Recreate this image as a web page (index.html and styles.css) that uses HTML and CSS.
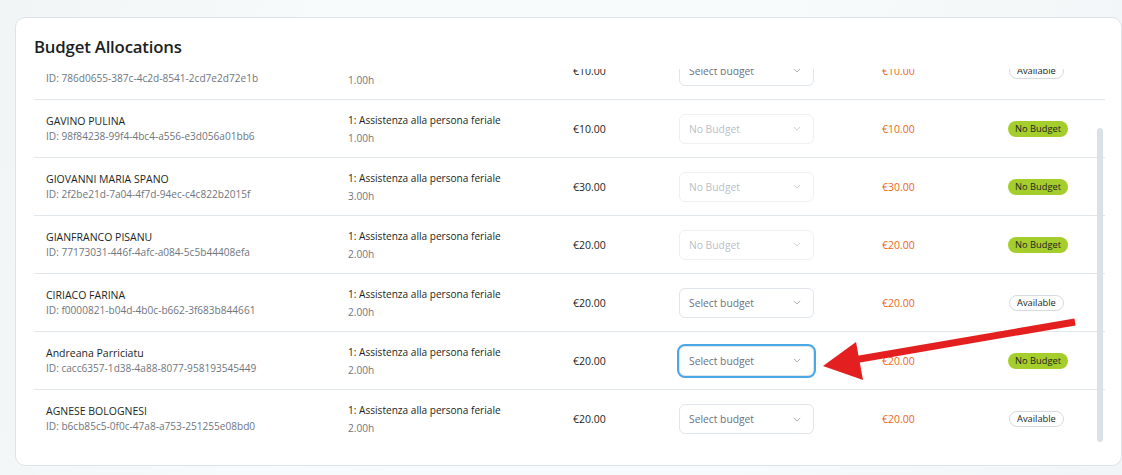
FILE: index.html
```html
<!DOCTYPE html>
<html lang="en">
<head>
<meta charset="utf-8">
<title>Budget Allocations</title>
<link rel="stylesheet" href="styles.css">
</head>
<body>
<section class="card">
  <h2 class="card-title">Budget Allocations</h2>
  <div class="viewport">
    <div class="table">
      <div class="row">
        <div class="cell person"><div class="name">ALTRO NOME</div><div class="sub">ID: 786d0655-387c-4c2d-8541-2cd7e2d72e1b</div></div>
        <div class="cell service"><div class="svc">1: Assistenza alla persona feriale</div><div class="sub">1.00h</div></div>
        <div class="cell amount">€10.00</div>
        <div class="cell"><div class="select"><span>Select budget</span><svg class="chev" viewBox="0 0 10 6"><path d="M1 1l4 4 4-4"/></svg></div></div>
        <div class="cell due">€10.00</div>
        <div class="cell"><span class="badge avail">Available</span></div>
      </div>
      <div class="row">
        <div class="cell person"><div class="name">GAVINO PULINA</div><div class="sub">ID: 98f84238-99f4-4bc4-a556-e3d056a01bb6</div></div>
        <div class="cell service"><div class="svc">1: Assistenza alla persona feriale</div><div class="sub">1.00h</div></div>
        <div class="cell amount">€10.00</div>
        <div class="cell"><div class="select disabled"><span>No Budget</span><svg class="chev" viewBox="0 0 10 6"><path d="M1 1l4 4 4-4"/></svg></div></div>
        <div class="cell due">€10.00</div>
        <div class="cell"><span class="badge none">No Budget</span></div>
      </div>
      <div class="row">
        <div class="cell person"><div class="name">GIOVANNI MARIA SPANO</div><div class="sub">ID: 2f2be21d-7a04-4f7d-94ec-c4c822b2015f</div></div>
        <div class="cell service"><div class="svc">1: Assistenza alla persona feriale</div><div class="sub">3.00h</div></div>
        <div class="cell amount">€30.00</div>
        <div class="cell"><div class="select disabled"><span>No Budget</span><svg class="chev" viewBox="0 0 10 6"><path d="M1 1l4 4 4-4"/></svg></div></div>
        <div class="cell due">€30.00</div>
        <div class="cell"><span class="badge none">No Budget</span></div>
      </div>
      <div class="row">
        <div class="cell person"><div class="name">GIANFRANCO PISANU</div><div class="sub">ID: 77173031-446f-4afc-a084-5c5b44408efa</div></div>
        <div class="cell service"><div class="svc">1: Assistenza alla persona feriale</div><div class="sub">2.00h</div></div>
        <div class="cell amount">€20.00</div>
        <div class="cell"><div class="select disabled"><span>No Budget</span><svg class="chev" viewBox="0 0 10 6"><path d="M1 1l4 4 4-4"/></svg></div></div>
        <div class="cell due">€20.00</div>
        <div class="cell"><span class="badge none">No Budget</span></div>
      </div>
      <div class="row">
        <div class="cell person"><div class="name">CIRIACO FARINA</div><div class="sub">ID: f0000821-b04d-4b0c-b662-3f683b844661</div></div>
        <div class="cell service"><div class="svc">1: Assistenza alla persona feriale</div><div class="sub">2.00h</div></div>
        <div class="cell amount">€20.00</div>
        <div class="cell"><div class="select"><span>Select budget</span><svg class="chev" viewBox="0 0 10 6"><path d="M1 1l4 4 4-4"/></svg></div></div>
        <div class="cell due">€20.00</div>
        <div class="cell"><span class="badge avail">Available</span></div>
      </div>
      <div class="row">
        <div class="cell person"><div class="name">Andreana Parriciatu</div><div class="sub">ID: cacc6357-1d38-4a88-8077-958193545449</div></div>
        <div class="cell service"><div class="svc">1: Assistenza alla persona feriale</div><div class="sub">2.00h</div></div>
        <div class="cell amount">€20.00</div>
        <div class="cell"><div class="select focused"><span>Select budget</span><svg class="chev" viewBox="0 0 10 6"><path d="M1 1l4 4 4-4"/></svg></div></div>
        <div class="cell due">€20.00</div>
        <div class="cell"><span class="badge none">No Budget</span></div>
      </div>
      <div class="row">
        <div class="cell person"><div class="name">AGNESE BOLOGNESI</div><div class="sub">ID: b6cb85c5-0f0c-47a8-a753-251255e08bd0</div></div>
        <div class="cell service"><div class="svc">1: Assistenza alla persona feriale</div><div class="sub">2.00h</div></div>
        <div class="cell amount">€20.00</div>
        <div class="cell"><div class="select"><span>Select budget</span><svg class="chev" viewBox="0 0 10 6"><path d="M1 1l4 4 4-4"/></svg></div></div>
        <div class="cell due">€20.00</div>
        <div class="cell"><span class="badge avail">Available</span></div>
      </div>
    </div>
    <div class="thumb"></div>
  </div>
</section>
<svg class="arrow" width="1122" height="475" viewBox="0 0 1122 475">
  <line x1="1075" y1="322" x2="848" y2="361" stroke="#e31f1f" stroke-width="7"/>
  <polygon points="823,366 856,342 863,380" fill="#e31f1f"/>
</svg>
</body>
</html>
```
FILE: styles.css
```css
html, body {
  margin: 0;
  padding: 0;
}
body {
  width: 1122px;
  height: 475px;
  overflow: hidden;
  background: linear-gradient(100deg, #f1f5f5 0%, #f8fbfb 30%, #f7fafa 70%, #f1f5f7 100%);
  font-family: "Open Sans", "Noto Sans", sans-serif;
  color: #1f2328;
  padding-top: 17px;
  box-sizing: border-box;
}
.card {
  margin-left: 15px;
  width: 1107px;
  height: 449px;
  box-sizing: border-box;
  background: #fff;
  border: 1px solid #dde3e7;
  border-radius: 10px;
  padding: 16px 0 0 18px;
}
.card-title {
  margin: 0;
  font-size: 16.8px;
  font-weight: 600;
  line-height: 26px;
  letter-spacing: -0.2px;
  color: #1c1f23;
}
.viewport {
  position: relative;
  margin-top: 9px;
  width: 1071px;
  height: 376px;
  overflow: hidden;
}
.table {
  margin-top: -27px;
}
.row {
  display: grid;
  grid-template-columns: 302px 225px 106px 203px 125px 1fr;
  align-items: center;
  height: 58px;
  box-sizing: border-box;
  padding-left: 12px;
  border-bottom: 1px solid #e1e7eb;
}
.row:last-child {
  border-bottom: none;
}
.cell {
  font-size: 10.5px;
}
.name {
  font-size: 10.5px;
  line-height: 15px;
  font-weight: 500;
  color: #1c1f23;
}
.person .sub {
  line-height: 15px;
}
.sub {
  color: #70767e;
  font-size: 10.1px;
}
.svc {
  font-size: 10.1px;
  font-weight: 500;
  line-height: 18px;
  color: #1c1f23;
}
.service .sub {
  line-height: 18px;
}
.amount {
  color: #1c1f23;
  font-weight: 500;
}
.due {
  color: #f0641d;
  font-weight: 500;
}
.select {
  width: 135px;
  height: 30px;
  box-sizing: border-box;
  border: 1px solid #dfe5ea;
  border-radius: 6px;
  display: flex;
  align-items: center;
  justify-content: space-between;
  padding: 0 12px 0 9px;
  color: #6b7280;
  font-size: 10.3px;
}
.select.disabled {
  color: #b9c0c7;
  border-color: #edf1f3;
}
.select.focused {
  outline: 2px solid #4aa8e6;
  outline-offset: 0px;
}
.chev {
  width: 8px;
  height: 5px;
  fill: none;
  stroke: #a3abb3;
  stroke-width: 1.2;
}
.select.disabled .chev {
  stroke: #c9cfd5;
}
.badge {
  display: inline-block;
  height: 16px;
  line-height: 16px;
  border-radius: 8px;
  font-size: 9.3px;
  padding: 0 7px;
  box-sizing: border-box;
  color: #1c1f23;
  font-weight: 500;
}
.badge.none {
  background: #a5cd2b;
  margin-left: 1px;
}
.badge.avail {
  background: #fff;
  border: 1px solid #d5dbe0;
  line-height: 14px;
  margin-left: 2px;
}
.thumb {
  position: absolute;
  right: 2px;
  top: 59px;
  width: 6px;
  height: 314px;
  border-radius: 3px;
  background: #dae2e7;
}
.arrow {
  position: absolute;
  left: 0;
  top: 0;
  pointer-events: none;
}
```
